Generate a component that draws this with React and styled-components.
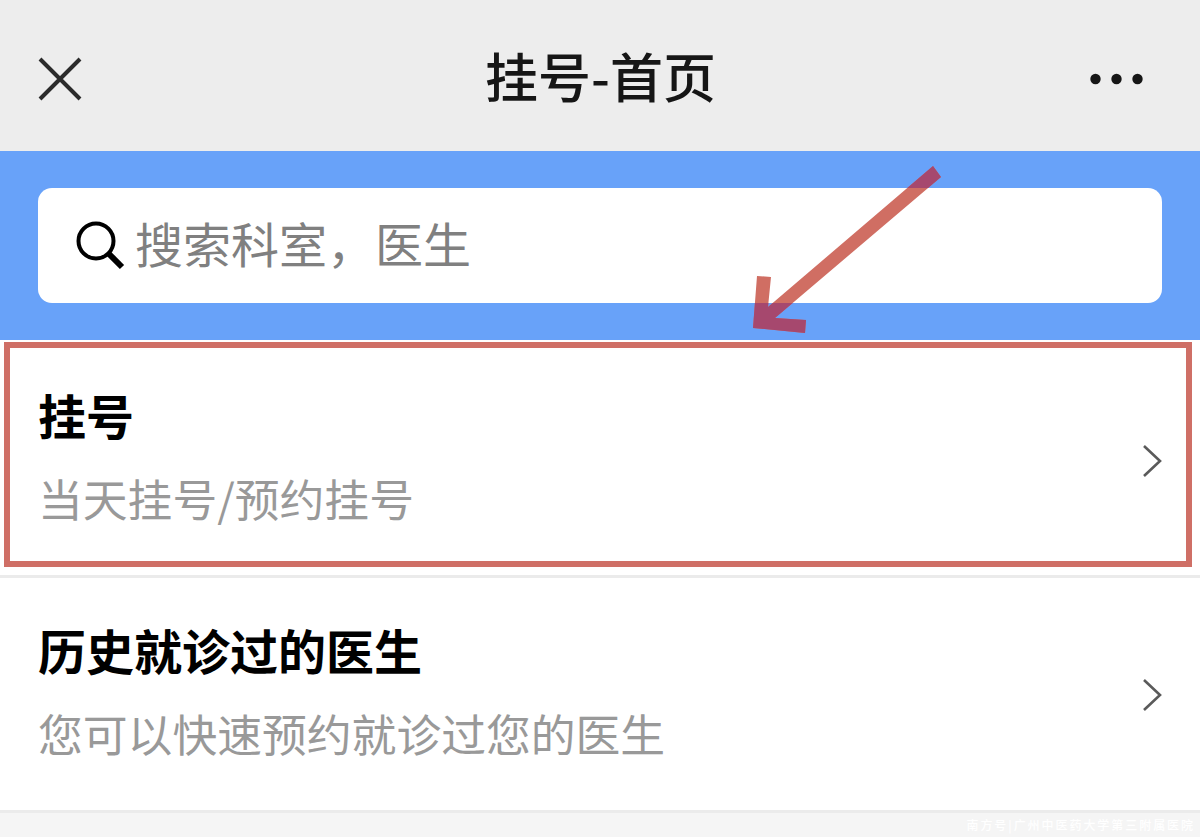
import React from 'react';
import styled, { createGlobalStyle } from 'styled-components';

const GlobalStyle = createGlobalStyle`
	html, body {
		margin: 0;
		padding: 0;
		background: #fff;
	}
	body {
		font-family: "Noto Sans CJK SC", "Noto Sans", sans-serif;
	}
`

const Page = styled.div`
	position: relative;
	width: 1200px;
	height: 837px;
	overflow: hidden;
	display: flex;
	flex-direction: column;
	background: #fff;
`

const Header = styled.header`
	height: 151px;
	flex: none;
	box-sizing: border-box;
	padding: 7px 57px 0 38px;
	display: grid;
	grid-template-columns: 1fr auto 1fr;
	align-items: center;
	background: #ededed;
`

const HeaderTitle = styled.h1`
	margin: 0 0 9px 20px;
	font-size: 53px;
	line-height: 60px;
	font-weight: 500;
	color: #161616;
`

const HeaderEnd = styled.div`
	display: flex;
	justify-content: flex-end;
`

const SearchBand = styled.div`
	height: 189px;
	flex: none;
	box-sizing: border-box;
	padding: 37px 38px;
	background: #68a2f9;
`

const SearchBox = styled.div`
	height: 115px;
	box-sizing: border-box;
	padding: 0 0 0 38px;
	display: flex;
	align-items: center;
	gap: 9px;
	border-radius: 14px;
	background: #fff;
`

const Placeholder = styled.span`
	margin-bottom: 8px;
	font-size: 48px;
	line-height: 60px;
	color: #808080;
`

const Row = styled.div`
	height: ${props => props.$height}px;
	flex: none;
	box-sizing: border-box;
	padding: 0 37px ${props => props.$bottom}px 38px;
	display: flex;
	align-items: center;
	justify-content: space-between;
	border-bottom: 3px solid #ebebeb;
`

const RowText = styled.div`
	display: flex;
	flex-direction: column;
	gap: 28px;
`

const RowTitle = styled.div`
	font-size: 48px;
	line-height: 56px;
	font-weight: 700;
	color: #000;
`

const RowSub = styled.div`
	font-size: 44.8px;
	line-height: 56px;
	color: #999;
`

const ChevronSlot = styled.div`
	display: flex;
	margin-top: 9px;
`

const Footer = styled.footer`
	flex: 1;
	box-sizing: border-box;
	padding: 0 5px 0 0;
	display: flex;
	align-items: center;
	justify-content: flex-end;
	background: #f5f5f5;
`

const Watermark = styled.span`
	font-size: 12px;
	line-height: 14px;
	font-weight: 500;
	letter-spacing: 1.95px;
	white-space: nowrap;
	color: #fff;
`

const Highlight = styled.div`
	position: absolute;
	left: 4px;
	top: 342px;
	width: 1188px;
	height: 225px;
	box-sizing: border-box;
	border: 6px solid #cf6f66;
	pointer-events: none;
`

const ArrowMark = styled.svg`
	position: absolute;
	left: 0;
	top: 0;
	pointer-events: none;
`

const CloseIcon = () => (
	<svg width="44" height="44" viewBox="0 0 44 44" fill="none" stroke="#2b2b2b" strokeWidth="4">
		<path d="M2 2 L42 42 M42 2 L2 42" />
	</svg>
)

const MoreIcon = () => (
	<svg width="53" height="12" viewBox="0 0 53 12" fill="#161616">
		<circle cx="5.5" cy="6" r="5.2" />
		<circle cx="26.5" cy="6" r="5.2" />
		<circle cx="47.5" cy="6" r="5.2" />
	</svg>
)

const SearchIcon = () => (
	<svg width="50" height="50" viewBox="0 0 50 50" fill="none" stroke="#000">
		<circle cx="20" cy="20" r="17.5" strokeWidth="4" />
		<path d="M32 32 L46 46" strokeWidth="6" />
	</svg>
)

const Chevron = () => (
	<svg width="22" height="34" viewBox="0 0 22 34" fill="none" stroke="#5a5a5a" strokeWidth="2.6">
		<path d="M3 2 L19 17 L3 32" />
	</svg>
)

const ARROW_POINTS = '933,166 941,177 775,318 806,320 805,333 753,328 757,276 771,277 768,307'

const Arrow = () => (
	<ArrowMark width="1200" height="837" viewBox="0 0 1200 837">
		<defs>
			<clipPath id="blueBands">
				<rect x="0" y="151" width="1200" height="37" />
				<rect x="0" y="303" width="1200" height="37" />
			</clipPath>
		</defs>
		<polygon points={ARROW_POINTS} fill="#d06e63" />
		<polygon points={ARROW_POINTS} fill="#a6486e" clipPath="url(#blueBands)" />
	</ArrowMark>
)

const items = [
	{ title: '挂号', sub: '当天挂号/预约挂号', height: 238, bottom: 3 },
	{ title: '历史就诊过的医生', sub: '您可以快速预约就诊过您的医生', height: 235, bottom: 7 },
]

export default function App() {
	return <Page>
		<GlobalStyle />
		<Header>
			<CloseIcon />
			<HeaderTitle>挂号-首页</HeaderTitle>
			<HeaderEnd>
				<MoreIcon />
			</HeaderEnd>
		</Header>
		<SearchBand>
			<SearchBox>
				<SearchIcon />
				<Placeholder>搜索科室，医生</Placeholder>
			</SearchBox>
		</SearchBand>
		{items.map(item => <Row key={item.title} $height={item.height} $bottom={item.bottom}>
			<RowText>
				<RowTitle>{item.title}</RowTitle>
				<RowSub>{item.sub}</RowSub>
			</RowText>
			<ChevronSlot>
				<Chevron />
			</ChevronSlot>
		</Row>)}
		<Footer>
			<Watermark>南方号|广州中医药大学第三附属医院</Watermark>
		</Footer>
		<Highlight />
		<Arrow />
	</Page>
}
